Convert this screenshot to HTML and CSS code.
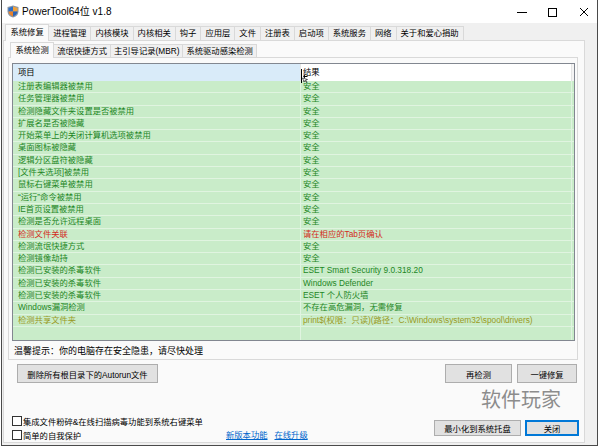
FILE: index.html
```html
<!DOCTYPE html>
<html lang="zh-CN">
<head>
<meta charset="utf-8">
<title>PowerTool64位 v1.8</title>
<link rel="stylesheet" href="styles.css">
</head>
<body>
<div class="window">
  <div class="titlebar">
    <svg class="appicon" viewBox="0 0 12 13" aria-hidden="true">
      <path d="M6 .4 11.5 2.1V6.4C11.5 9.5 9.1 11.6 6 12.6 2.9 11.6.5 9.5.5 6.4V2.1Z" fill="#8e99a6"/>
      <path d="M6 1.5V6.6H1.5V2.9Z" fill="#2f6fc6"/>
      <path d="M6 1.5 10.5 2.9V6.6H6Z" fill="#f2a23a"/>
      <path d="M1.5 6.6H6V11.5C3.5 10.6 1.6 8.9 1.5 6.6Z" fill="#e8822a"/>
      <path d="M6 6.6H10.5C10.4 8.9 8.5 10.6 6 11.5Z" fill="#2a62b4"/>
    </svg>
    <span class="title">PowerTool64位 v1.8</span>
    <div class="controls">
      <span class="ctl"><svg width="10" height="10" viewBox="0 0 10 10"><path d="M0 5.5H10" stroke="#000" stroke-width="1"/></svg></span>
      <span class="ctl"><svg width="10" height="10" viewBox="0 0 10 10"><rect x="1.5" y="1.5" width="8" height="8" fill="none" stroke="#000" stroke-width="1"/></svg></span>
      <span class="ctl ctl-close"><svg width="10" height="10" viewBox="0 0 10 10"><path d="M1 1 9 9M9 1 1 9" stroke="#000" stroke-width="1"/></svg></span>
    </div>
  </div>
  <div class="client">
    <div class="tabs main-tabs">
      <span class="tab active">系统修复</span>
      <span class="tab">进程管理</span>
      <span class="tab">内核模块</span>
      <span class="tab">内核相关</span>
      <span class="tab">钩子</span>
      <span class="tab">应用层</span>
      <span class="tab">文件</span>
      <span class="tab">注册表</span>
      <span class="tab">启动项</span>
      <span class="tab">系统服务</span>
      <span class="tab">网络</span>
      <span class="tab">关于和爱心捐助</span>
    </div>
    <div class="page outer-page">
      <div class="tabs sub-tabs">
        <span class="tab sub active">系统检测</span>
        <span class="tab sub">流氓快捷方式</span>
        <span class="tab sub">主引导记录(MBR)</span>
        <span class="tab sub">系统驱动感染检测</span>
      </div>
      <div class="page inner-page">
        <div class="listview">
          <div class="lv-head">
            <div class="c1 hot">项目</div>
            <div class="c2">结果</div>
            <div class="c3"></div>
            <svg class="cursor" width="9" height="16" viewBox="0 0 9 16" aria-hidden="true">
              <path d="M1.5 1V15" stroke="#000" stroke-width="1"/>
              <path d="M3 8.5 5 6.5V8H7.5V9H5V10.5Z" fill="#000"/>
              <path d="M2.5 10 4 14 5 12.5 6.5 14.5 7 14 5.5 12 7.5 11.5Z" fill="#fff" stroke="#000" stroke-width=".6"/>
            </svg>
          </div>
          <div class="row"><div class="c1">注册表编辑器被禁用</div><div class="c2">安全</div><div class="c3"></div></div>
          <div class="row"><div class="c1">任务管理器被禁用</div><div class="c2">安全</div><div class="c3"></div></div>
          <div class="row"><div class="c1">检测隐藏文件夹设置是否被禁用</div><div class="c2">安全</div><div class="c3"></div></div>
          <div class="row"><div class="c1">扩展名是否被隐藏</div><div class="c2">安全</div><div class="c3"></div></div>
          <div class="row"><div class="c1">开始菜单上的关闭计算机选项被禁用</div><div class="c2">安全</div><div class="c3"></div></div>
          <div class="row"><div class="c1">桌面图标被隐藏</div><div class="c2">安全</div><div class="c3"></div></div>
          <div class="row"><div class="c1">逻辑分区盘符被隐藏</div><div class="c2">安全</div><div class="c3"></div></div>
          <div class="row"><div class="c1">[文件夹选项]被禁用</div><div class="c2">安全</div><div class="c3"></div></div>
          <div class="row"><div class="c1">鼠标右键菜单被禁用</div><div class="c2">安全</div><div class="c3"></div></div>
          <div class="row"><div class="c1">“运行”命令被禁用</div><div class="c2">安全</div><div class="c3"></div></div>
          <div class="row"><div class="c1">IE首页设置被禁用</div><div class="c2">安全</div><div class="c3"></div></div>
          <div class="row"><div class="c1">检测是否允许远程桌面</div><div class="c2">安全</div><div class="c3"></div></div>
          <div class="row warn"><div class="c1">检测文件关联</div><div class="c2">请在相应的Tab页确认</div><div class="c3"></div></div>
          <div class="row"><div class="c1">检测流氓快捷方式</div><div class="c2">安全</div><div class="c3"></div></div>
          <div class="row"><div class="c1">检测镜像劫持</div><div class="c2">安全</div><div class="c3"></div></div>
          <div class="row"><div class="c1">检测已安装的杀毒软件</div><div class="c2">ESET Smart Security 9.0.318.20</div><div class="c3"></div></div>
          <div class="row"><div class="c1">检测已安装的杀毒软件</div><div class="c2">Windows Defender</div><div class="c3"></div></div>
          <div class="row"><div class="c1">检测已安装的杀毒软件</div><div class="c2">ESET 个人防火墙</div><div class="c3"></div></div>
          <div class="row"><div class="c1">Windows漏洞检测</div><div class="c2">不存在高危漏洞，无需修复</div><div class="c3"></div></div>
          <div class="row note"><div class="c1">检测共享文件夹</div><div class="c2">print$(权限：只读)(路径：C:\Windows\system32\spool\drivers)</div><div class="c3"></div></div>
          <div class="lv-fill"><div class="c1"></div><div class="c2"></div><div class="c3"></div></div>
        </div>
        <div class="status">温馨提示：你的电脑存在安全隐患，请尽快处理</div>
      </div>
      <div class="actions">
        <span class="btn btn-autorun">删除所有根目录下的Autorun文件</span>
        <div class="btn-group">
          <span class="btn btn-recheck">再检测</span>
          <span class="btn btn-fix">一键修复</span>
        </div>
      </div>
      <div class="watermark">软件玩家</div>
      <div class="footer">
        <div class="checks">
          <label class="check"><span class="box"></span>集成文件粉碎&amp;在线扫描病毒功能到系统右键菜单</label>
          <label class="check"><span class="box"></span>简单的自我保护</label>
        </div>
        <div class="links">
          <a class="link">新版本功能</a>
          <a class="link">在线升级</a>
        </div>
        <div class="footer-btns">
          <span class="btn btn-sm btn-tray">最小化到系统托盘</span>
          <span class="btn btn-sm btn-close btn-default">关闭</span>
        </div>
      </div>
    </div>
  </div>
</div>
</body>
</html>
```
FILE: styles.css
```css
* { box-sizing: border-box; }
html, body { margin: 0; padding: 0; background: #fff; }
body {
  font-family: "Liberation Sans", "Noto Sans CJK SC", sans-serif;
  font-size: 8.3px;
  color: #000;
}
.window {
  margin-left: 1px;
  width: 597px;
  height: 446px;
  border: 1px solid #4a4a4a;
  border-top: none;
  display: flex;
  flex-direction: column;
  background: #f0f0f0;
}
.titlebar {
  flex: none;
  height: 23px;
  background: #fff;
  display: flex;
  align-items: center;
}
.appicon { width: 12px; height: 13px; margin-left: 5px; }
.title { margin-left: 3px; font-size: 10px; line-height: 12px; }
.controls { margin-left: auto; display: flex; height: 100%; }
.ctl { width: 30px; display: flex; align-items: center; justify-content: center; }
.ctl-close { padding-left: 3px; }

.client { flex: 1; padding: 1px 0 0 1px; }

.tabs { display: flex; align-items: flex-end; position: relative; z-index: 1; }
.main-tabs { height: 16px; padding-left: 2px; }
.sub-tabs { height: 15px; padding-left: 2px; }
.tab {
  height: 14px;
  line-height: 13px;
  padding: 0 4px;
  border: 1px solid #d9d9d9;
  border-bottom: none;
  margin-right: -1px;
  background: #f0f0f0;
  white-space: nowrap;
}
.tab.sub { height: 13px; line-height: 12px; padding: 0 3px; }
.tab.active {
  height: 17px;
  line-height: 15px;
  background: #fafafa;
  margin-bottom: -1px;
  padding: 0 4.5px;
}
.tab.sub.active { height: 16px; line-height: 14px; }

.page { border: 1px solid #d9d9d9; background: #fafafa; }
.outer-page {
  width: 582px;
  height: 403px;
  padding: 1px 0 0 4px;
  display: flex;
  flex-direction: column;
}
.inner-page {
  flex: none;
  width: 570px;
  height: 303px;
  padding: 5px 0 0 3px;
}

.listview {
  width: 563px;
  height: 278px;
  border: 1px solid #828790;
  background: #c9ecc9;
  display: flex;
  flex-direction: column;
  overflow: hidden;
  color: #1d861f;
}
.lv-head {
  position: relative;
  flex: none;
  display: flex;
  height: 17px;
  line-height: 17px;
  background: #fff;
  color: #000;
}
.lv-head .c1 { border-right: 1px solid #e5e5e5; }
.lv-head .c2 { border-right: 1px solid #e5e5e5; }
.lv-head .c3 { background: #f4f4f4; }
.lv-head .hot { background: #d9ebf9; }
.cursor { position: absolute; left: 287px; top: 4px; }
.row {
  flex: none;
  display: flex;
  height: 12.3px;
  line-height: 11.3px;
  border-bottom: 1px solid #e0f4e0;
  white-space: nowrap;
}
.lv-fill { flex: 1; display: flex; }
.c1 { width: 288px; flex: none; padding-left: 5px; border-right: 1px solid #e0f4e0; overflow: hidden; }
.c2 { width: 271px; flex: none; padding-left: 2px; border-right: 1px solid #e0f4e0; overflow: hidden; }
.c3 { flex: 1; }
.row.warn { color: #d42a20; }
.row.note { color: #999a1e; }

.status {
  margin-top: 3px;
  width: 563px;
  height: 14px;
  line-height: 14px;
  padding-left: 2px;
  font-size: 9px;
}

.actions {
  flex: none;
  margin-top: 4px;
  height: 19px;
  display: flex;
  justify-content: space-between;
  padding: 0 7px 0 9px;
}
.btn-group { display: flex; gap: 5px; }
.btn {
  height: 19px;
  border: 1px solid #adadad;
  background: #e1e1e1;
  display: flex;
  align-items: center;
  justify-content: center;
  white-space: nowrap;
}
.btn-autorun { width: 141px; }
.btn-recheck { width: 67px; }
.btn-fix { width: 60px; }

.watermark {
  flex: none;
  margin-top: 6px;
  height: 20px;
  line-height: 20px;
  font-family: "Noto Sans CJK SC", sans-serif;
  font-size: 20px;
  color: #8c8c8c;
  text-align: right;
  padding-right: 23px;
}

.footer {
  flex: none;
  margin-top: 5px;
  height: 28px;
  display: flex;
  padding-right: 5px;
}
.checks { width: 218px; padding-left: 4px; flex: none; }
.check { height: 14px; display: flex; align-items: center; white-space: nowrap; }
.box {
  width: 10px;
  height: 10px;
  border: 1px solid #333;
  background: #fff;
  margin-right: 1px;
  flex: none;
}
.links { align-self: flex-end; height: 14px; line-height: 14px; display: flex; gap: 7px; }
.link { color: #0066cc; text-decoration: underline; }
.footer-btns { margin-left: auto; margin-top: 6px; display: flex; gap: 4px; }
.btn-sm { height: 16px; }
.btn-tray { width: 87px; }
.btn-close { width: 54px; }
.btn-default { border-color: #0078d7; box-shadow: inset 0 0 0 1px #0078d7; }
```
